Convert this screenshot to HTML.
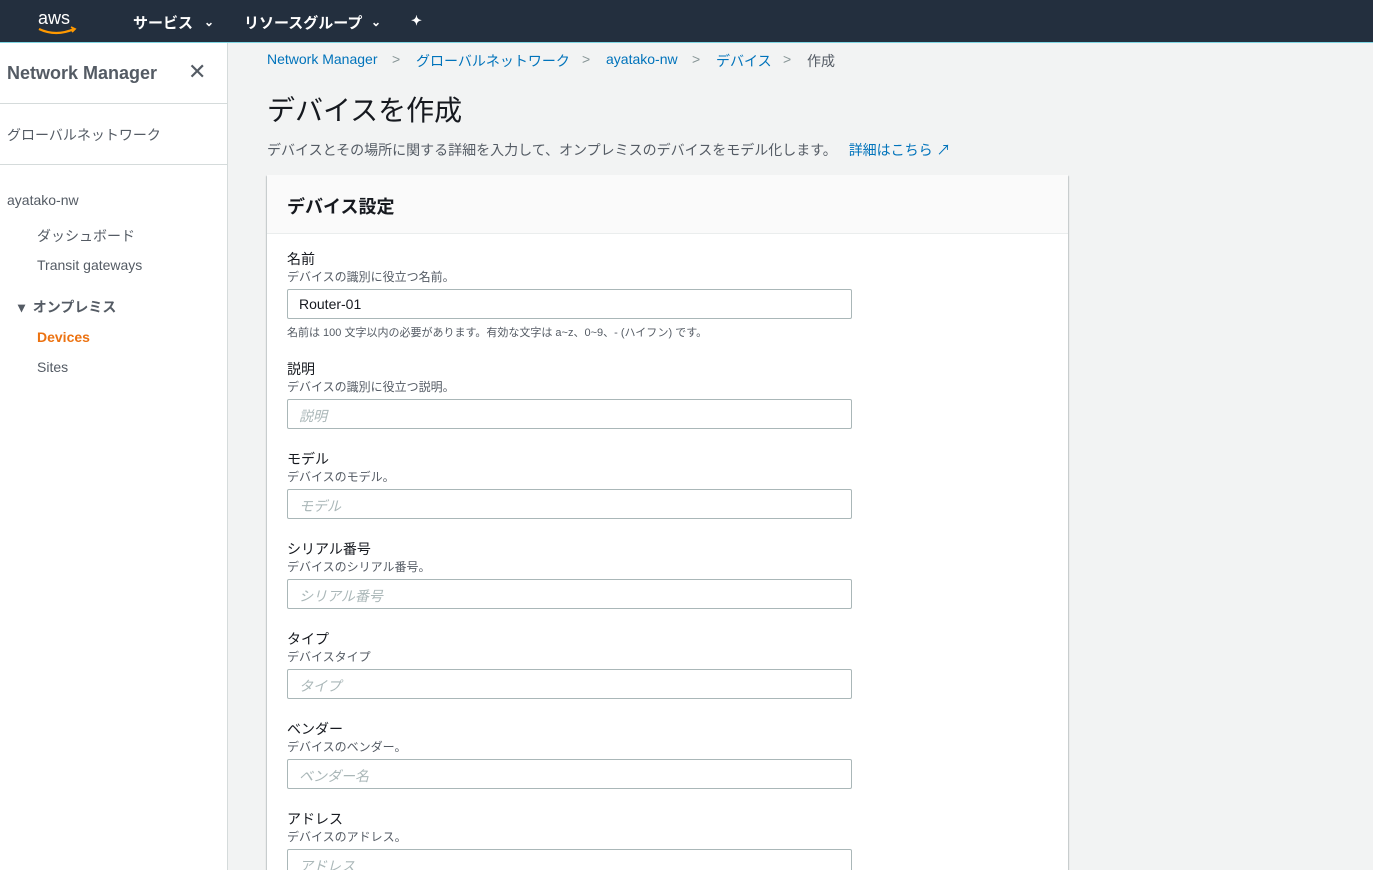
<!DOCTYPE html>
<html style="width:1373px;height:870px;overflow:hidden"><head><meta charset="utf-8"><style>
*{box-sizing:border-box;margin:0;padding:0}
body{width:1373px;height:870px;overflow:hidden;background:#f2f3f3;font-family:"Liberation Sans","Noto Sans CJK JP",sans-serif;color:#16191f;position:relative}
.top{position:absolute;left:0;top:0;width:1373px;height:43px;background:#232f3e;border-bottom:1px solid #7fd6e3}
.top span{position:absolute;color:#fff;font-weight:bold;font-size:15px;top:12px}
.side{position:absolute;left:0;top:43px;width:228px;height:827px;background:#fff;border-right:1px solid #d5dbdb}
.abs{position:absolute;white-space:nowrap}
.hr{position:absolute;left:0;width:227px;height:1px;background:#d5dbdb}
.bc{color:#0073bb;font-size:14px;top:51px}
.panel{position:absolute;left:267px;top:175px;width:801px;height:695px;background:#fff;box-shadow:0 1px 1px rgba(0,28,36,.3),1px 1px 1px rgba(0,28,36,.15),-1px 1px 1px rgba(0,28,36,.15)}
.ph{height:59px;background:#fafafa;border-bottom:1px solid #eaeded}
.lab{position:absolute;left:20px;font-size:14px;color:#16191f}
.desc{position:absolute;left:20px;font-size:12px;color:#545b64}
.inp{position:absolute;left:20px;width:565px;height:30px;border:1px solid #aab7b8;border-radius:2px;font-size:14px;padding:6px 11px;color:#aab7b8;font-style:italic}
</style></head><body>
<div class="top">
<svg class="abs" style="left:36px;top:8px" width="44" height="28" viewBox="0 0 44 28"><text x="2" y="16" fill="#fff" font-size="18" font-family="Liberation Sans">aws</text><path d="M3 21 Q20 29 38 21" stroke="#f90" stroke-width="2.2" fill="none"/><path d="M35 19 L39 21 L36 24" stroke="#f90" stroke-width="1.8" fill="none"/></svg>
<span style="left:133px">サービス</span><span style="left:204px;font-size:12px;top:15px">⌄</span>
<span style="left:244px">リソースグループ</span><span style="left:371px;font-size:12px;top:15px">⌄</span>
<span style="left:411px;font-size:13px;top:13px">✦</span>
</div>
<div class="side">
<div class="abs" style="left:7px;top:20px;font-size:18px;font-weight:bold;color:#545b64">Network Manager</div>
<div class="abs" style="left:188px;top:16px;font-size:22px;color:#545b64">✕</div>
<div class="hr" style="top:60px"></div>
<div class="abs" style="left:7px;top:82px;font-size:14px;color:#545b64">グローバルネットワーク</div>
<div class="hr" style="top:121px"></div>
<div class="abs" style="left:7px;top:149px;font-size:14px;color:#545b64">ayatako-nw</div>
<div class="abs" style="left:37px;top:183px;font-size:14px;color:#545b64">ダッシュボード</div>
<div class="abs" style="left:37px;top:214px;font-size:14px;color:#545b64">Transit gateways</div>
<div class="abs" style="left:18px;top:254px;font-size:14px;font-weight:bold;color:#545b64">▾&nbsp; オンプレミス</div>
<div class="abs" style="left:37px;top:286px;font-size:14px;font-weight:bold;color:#ec7211">Devices</div>
<div class="abs" style="left:37px;top:316px;font-size:14px;color:#545b64">Sites</div>
</div>
<div class="abs bc" style="left:267px">Network Manager</div>
<div class="abs bc" style="left:392px;color:#879596">&gt;</div>
<div class="abs bc" style="left:416px">グローバルネットワーク</div>
<div class="abs bc" style="left:582px;color:#879596">&gt;</div>
<div class="abs bc" style="left:606px">ayatako-nw</div>
<div class="abs bc" style="left:692px;color:#879596">&gt;</div>
<div class="abs bc" style="left:716px">デバイス</div>
<div class="abs bc" style="left:783px;color:#879596">&gt;</div>
<div class="abs bc" style="left:807px;color:#545b64">作成</div>
<div class="abs" style="left:267px;top:89px;font-size:28px">デバイスを作成</div>
<div class="abs" style="left:267px;top:140px;font-size:14px;color:#545b64">デバイスとその場所に関する詳細を入力して、オンプレミスのデバイスをモデル化します。 <span style="color:#0073bb;margin-left:8px">詳細はこちら ↗</span></div>
<div class="panel">
<div class="ph"><div class="abs" style="left:20px;top:18px;font-size:18px;font-weight:bold">デバイス設定</div></div>
<div class="lab" style="top:74px">名前</div><div class="desc" style="top:93px">デバイスの識別に役立つ名前。</div>
<div class="inp" style="top:114px;color:#16191f;font-style:normal">Router-01</div>
<div class="desc" style="top:149px;font-size:11px">名前は 100 文字以内の必要があります。有効な文字は a~z、0~9、- (ハイフン) です。</div>
<div class="lab" style="top:184px">説明</div><div class="desc" style="top:203px">デバイスの識別に役立つ説明。</div><div class="inp" style="top:224px">説明</div>
<div class="lab" style="top:274px">モデル</div><div class="desc" style="top:293px">デバイスのモデル。</div><div class="inp" style="top:314px">モデル</div>
<div class="lab" style="top:364px">シリアル番号</div><div class="desc" style="top:383px">デバイスのシリアル番号。</div><div class="inp" style="top:404px">シリアル番号</div>
<div class="lab" style="top:454px">タイプ</div><div class="desc" style="top:473px">デバイスタイプ</div><div class="inp" style="top:494px">タイプ</div>
<div class="lab" style="top:544px">ベンダー</div><div class="desc" style="top:563px">デバイスのベンダー。</div><div class="inp" style="top:584px">ベンダー名</div>
<div class="lab" style="top:634px">アドレス</div><div class="desc" style="top:653px">デバイスのアドレス。</div><div class="inp" style="top:674px">アドレス</div>
</div>
</body></html>
